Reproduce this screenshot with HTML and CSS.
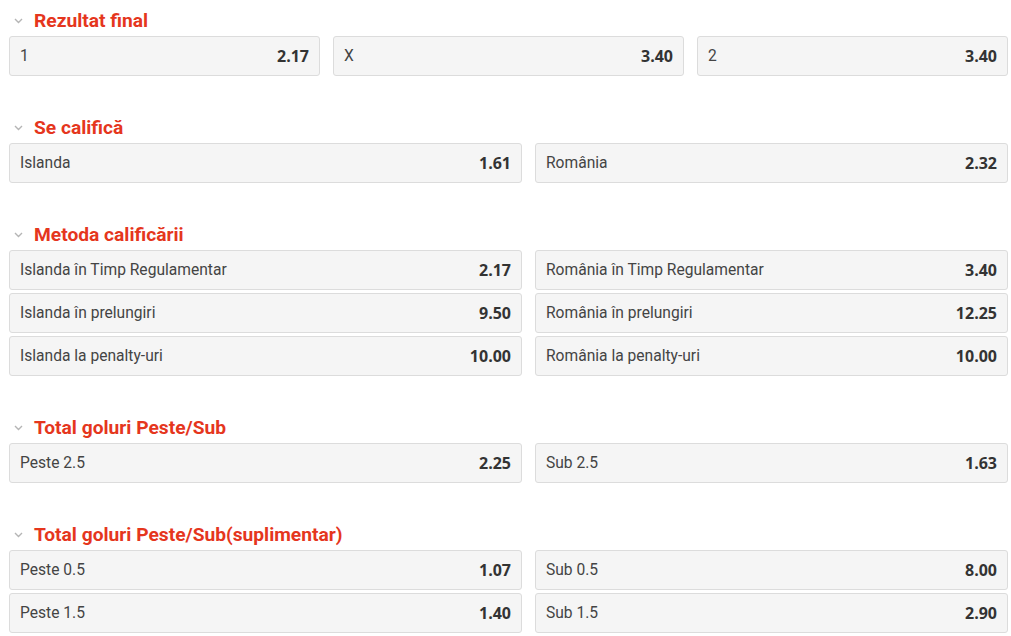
FILE: index.html
```html
<!DOCTYPE html>
<html lang="ro">
<head>
  <meta charset="UTF-8" />
  <title>Pariuri</title>
  <link rel="stylesheet" href="styles.css">
</head>
<body>

  <!-- Rezultat final -->
  <div class="market">
    <div class="market-head">
      <svg class="chev" width="9" height="6" viewBox="0 0 9 6"><path d="M1 1l3.5 3.5L8 1" fill="none" stroke="#b5b5b5" stroke-width="1.4"/></svg>
      <h2>Rezultat final</h2>
    </div>
    <div class="grid grid-3">
      <div class="odd"><span class="lbl">1</span><span class="val">2.17</span></div>
      <div class="odd"><span class="lbl">X</span><span class="val">3.40</span></div>
      <div class="odd"><span class="lbl">2</span><span class="val">3.40</span></div>
    </div>
  </div>

  <!-- Se califica -->
  <div class="market">
    <div class="market-head">
      <svg class="chev" width="9" height="6" viewBox="0 0 9 6"><path d="M1 1l3.5 3.5L8 1" fill="none" stroke="#b5b5b5" stroke-width="1.4"/></svg>
      <h2>Se califică</h2>
    </div>
    <div class="grid grid-2">
      <div class="odd"><span class="lbl">Islanda</span><span class="val">1.61</span></div>
      <div class="odd"><span class="lbl">România</span><span class="val">2.32</span></div>
    </div>
  </div>

  <!-- Metoda calificarii -->
  <div class="market">
    <div class="market-head">
      <svg class="chev" width="9" height="6" viewBox="0 0 9 6"><path d="M1 1l3.5 3.5L8 1" fill="none" stroke="#b5b5b5" stroke-width="1.4"/></svg>
      <h2>Metoda calificării</h2>
    </div>
    <div class="grid grid-2">
      <div class="odd"><span class="lbl">Islanda în Timp Regulamentar</span><span class="val">2.17</span></div>
      <div class="odd"><span class="lbl">România în Timp Regulamentar</span><span class="val">3.40</span></div>
      <div class="odd"><span class="lbl">Islanda în prelungiri</span><span class="val">9.50</span></div>
      <div class="odd"><span class="lbl">România în prelungiri</span><span class="val">12.25</span></div>
      <div class="odd"><span class="lbl">Islanda la penalty-uri</span><span class="val">10.00</span></div>
      <div class="odd"><span class="lbl">România la penalty-uri</span><span class="val">10.00</span></div>
    </div>
  </div>

  <!-- Total goluri -->
  <div class="market">
    <div class="market-head">
      <svg class="chev" width="9" height="6" viewBox="0 0 9 6"><path d="M1 1l3.5 3.5L8 1" fill="none" stroke="#b5b5b5" stroke-width="1.4"/></svg>
      <h2>Total goluri Peste/Sub</h2>
    </div>
    <div class="grid grid-2">
      <div class="odd"><span class="lbl">Peste 2.5</span><span class="val">2.25</span></div>
      <div class="odd"><span class="lbl">Sub 2.5</span><span class="val">1.63</span></div>
    </div>
  </div>

  <!-- Total goluri suplimentar -->
  <div class="market">
    <div class="market-head">
      <svg class="chev" width="9" height="6" viewBox="0 0 9 6"><path d="M1 1l3.5 3.5L8 1" fill="none" stroke="#b5b5b5" stroke-width="1.4"/></svg>
      <h2>Total goluri Peste/Sub(suplimentar)</h2>
    </div>
    <div class="grid grid-2">
      <div class="odd"><span class="lbl">Peste 0.5</span><span class="val">1.07</span></div>
      <div class="odd"><span class="lbl">Sub 0.5</span><span class="val">8.00</span></div>
      <div class="odd"><span class="lbl">Peste 1.5</span><span class="val">1.40</span></div>
      <div class="odd"><span class="lbl">Sub 1.5</span><span class="val">2.90</span></div>
    </div>
  </div>

</body>
</html>
```

FILE: styles.css
```css
body {
  margin: 0;
  padding: 4px 3px 0 9px;
  font-family: Roboto, 'Noto Sans', sans-serif;
  background-color: #fff;
  color: #333;
}

.market {
  margin-bottom: 35px;
}

.market:last-child {
  margin-bottom: 0;
}

.market-head {
  display: flex;
  align-items: center;
  height: 32px;
}

.chev {
  margin: 1px 0 0 5px;
  width: 9px;
  height: 6px;
}

.market-head h2 {
  margin: 0 0 0 11px;
  font-size: 19.2px;
  font-weight: bold;
  color: #e5361d;
}

.grid {
  display: grid;
  column-gap: 13px;
  row-gap: 3px;
}

.grid-3 {
  grid-template-columns: 311fr 351fr 311fr;
}

.grid-2 {
  grid-template-columns: 513fr 473fr;
}

.odd {
  display: flex;
  justify-content: space-between;
  align-items: center;
  height: 38px;
  padding: 0 10px 0 10px;
  background-color: #f5f5f5;
  border: 1px solid #dcdcdc;
  border-radius: 3px;
}

.lbl {
  font-size: 15.6px;
  color: #444;
}

.val {
  font-family: 'Open Sans', sans-serif;
  font-size: 16px;
  font-weight: bold;
  color: #333;
}
```
